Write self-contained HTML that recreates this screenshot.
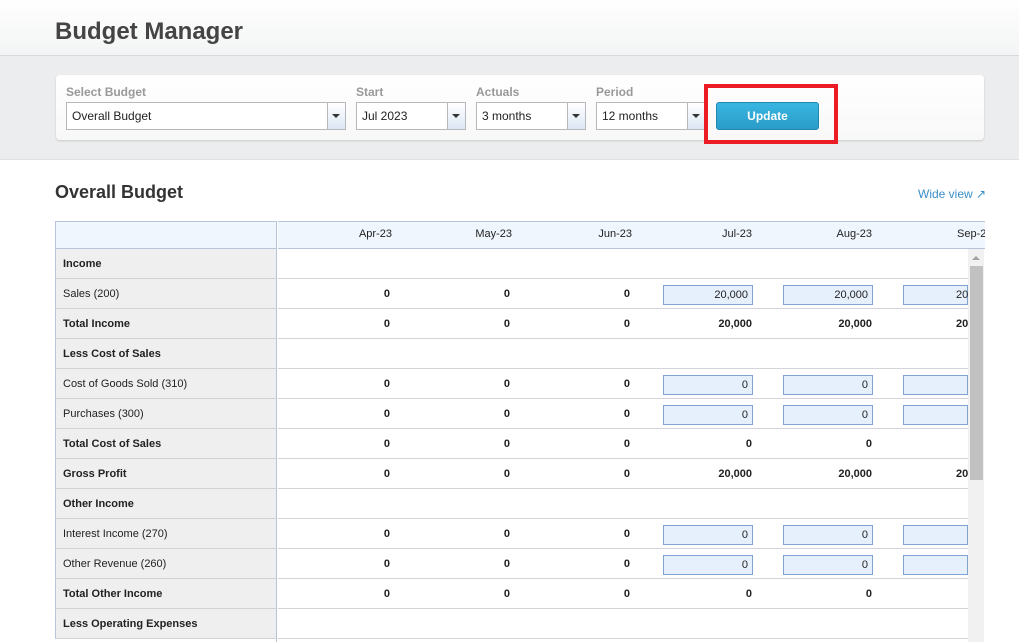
<!DOCTYPE html>
<html><head><style>
*{box-sizing:border-box;margin:0;padding:0}
body{width:1019px;height:642px;overflow:hidden;background:#fff;font-family:"Liberation Sans",Arial,sans-serif;position:relative;color:#222}
.top{position:absolute;left:0;top:0;width:1019px;height:56px;background:linear-gradient(#fff,#f3f4f5);border-bottom:1px solid #d8d9db}
.top h1{position:absolute;left:55px;top:18px;font-size:24px;font-weight:bold;color:#444}
.band{position:absolute;left:0;top:56px;width:1019px;height:104px;background:#ecedee;border-bottom:1px solid #e0e0e0}
.panel{position:absolute;left:56px;top:75px;width:928px;height:65px;background:linear-gradient(#fff,#f8f8f8);border-radius:4px;box-shadow:0 1px 2px rgba(0,0,0,.15)}
.lbl{position:absolute;top:85px;font-size:12px;font-weight:bold;color:#999}
.sel{position:absolute;top:102px;height:28px;border:1px solid #b5b8bc;background:#fff;font-size:12px;padding:6px 0 0 5px;color:#222}
.sel:after{content:"";position:absolute;right:0;top:0;width:17px;height:26px;border-left:1px solid #b5b8bc;background:linear-gradient(#fff,#dce6f3)}
.sel b{position:absolute;right:5px;top:11px;width:0;height:0;border-left:4px solid transparent;border-right:4px solid transparent;border-top:4px solid #333;z-index:2}
.btn{position:absolute;left:716px;top:102px;width:103px;height:28px;border-radius:3px;background:linear-gradient(#3ab6e2,#2a9cc8);border:1px solid #2388b0;color:#fff;font-weight:bold;font-size:12px;text-align:center;line-height:26px}
.red{position:absolute;left:704px;top:84px;width:134px;height:60px;border:4px solid #ec1c24}
h2{position:absolute;left:55px;top:182px;font-size:18px;font-weight:bold;color:#333}
.wide{position:absolute;left:918px;top:187px;font-size:12px;color:#3a8fc8}
.lc{position:absolute;left:55px;width:221px;background:#efefef;border-left:1px solid #b8c4d8;border-bottom:1px solid #cfd2d6;padding-left:7px;font-size:11px}
.num{position:absolute;width:114px;text-align:right;font-size:11px;white-space:nowrap}
.inp{position:absolute;width:90px;height:20px;background:#e6f0fc;border:1px solid #7ea4cf;text-align:right;padding-right:4px;font-size:11px;line-height:18px}
.hl{position:absolute;left:278px;width:690px;height:1px;background:#d2d4d7}
</style></head><body>
<div class="top"><h1>Budget Manager</h1></div>
<div class="band"></div>
<div class="panel"></div>
<div class="lbl" style="left:66px">Select Budget</div>
<div class="lbl" style="left:356px">Start</div>
<div class="lbl" style="left:476px">Actuals</div>
<div class="lbl" style="left:596px">Period</div>
<div class="sel" style="left:66px;width:280px">Overall Budget<b></b></div>
<div class="sel" style="left:356px;width:110px">Jul 2023<b></b></div>
<div class="sel" style="left:476px;width:110px">3 months<b></b></div>
<div class="sel" style="left:596px;width:110px">12 months<b></b></div>
<div class="btn">Update</div>
<div class="red"></div>
<h2>Overall Budget</h2>
<div class="wide">Wide view <span style="color:#3a8fc8">&#x2197;</span></div>
<div style="position:absolute;left:55px;top:221px;width:930px;height:28px;background:#f0f6fe;border-top:1px solid #b8c4d8;border-bottom:1px solid #b8c4d8;border-left:1px solid #b8c4d8"></div>
<div style="position:absolute;left:276px;top:221px;width:2px;height:421px;background:#fff;border-left:1px solid #b8c4d8"></div>
<div style="position:absolute;left:968px;top:249px;width:16px;height:393px;background:#f1f1f1"></div>
<div style="position:absolute;left:970px;top:266px;width:13px;height:214px;background:#c1c1c1"></div>
<div style="position:absolute;left:972px;top:256px;width:0;height:0;border-left:4px solid transparent;border-right:4px solid transparent;border-bottom:4px solid #a3a3a3"></div>
<div id="t"></div>
<script>
var months=["Apr-23","May-23","Jun-23","Jul-23","Aug-23","Sep-23"];
var h='';
months.forEach(function(m,i){var x=278+120*i;h+='<div class="num" style="left:'+x+'px;top:228px;'+(i==5?'width:120px;text-align:left;padding-left:79px;':'')+'">'+m+'</div>';});
var rows=[["Income",1,null],["Sales (200)",0,"20,000"],["Total Income",1,"20,000",1],["Less Cost of Sales",1,null],["Cost of Goods Sold (310)",0,"0"],["Purchases (300)",0,"0"],["Total Cost of Sales",1,"0",1],["Gross Profit",1,"20,000",1],["Other Income",1,null],["Interest Income (270)",0,"0"],["Other Revenue (260)",0,"0"],["Total Other Income",1,"0",1],["Less Operating Expenses",1,null]];
rows.forEach(function(r,k){var y=249+30*k;
h+='<div class="lc" style="top:'+y+'px;height:30px;line-height:31px;'+(r[1]?'font-weight:bold':'')+'">'+r[0]+'</div>';
h+='<div class="hl" style="top:'+(y+29)+'px"></div>';
if(r[2]!==null){for(var i=0;i<6;i++){var x=278+120*i;
 if(i<3){h+='<div class="num" style="left:'+(x-2)+'px;top:'+(y+9)+'px;font-weight:bold">0</div>';}
 else if(r[3]){ if(i<5)h+='<div class="num" style="left:'+x+'px;top:'+(y+9)+'px;font-weight:bold">'+r[2]+'</div>'; else h+='<div style="position:absolute;left:956px;top:'+(y+9)+'px;font-size:11px;font-weight:bold">'+(r[2]=="0"?"":"20")+'</div>';}
 else { h+='<div class="inp" style="left:'+(x+25)+'px;top:'+(y+6)+'px;'+(i==5?'width:65px;text-align:left;padding-left:52px;':'')+'">'+(i==5?(r[2]=="0"?"":"20"):r[2])+'</div>';}
}}});
document.getElementById('t').innerHTML=h;
</script>
<div style="position:absolute;left:985px;top:215px;width:34px;height:427px;background:#fff"></div>
</body></html>
